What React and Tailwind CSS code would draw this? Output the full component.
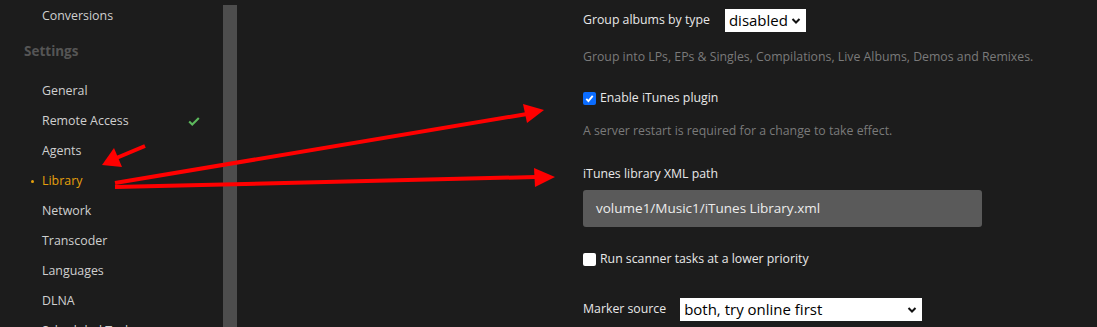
import React from 'react';

const navItems = [
  { label: 'General' },
  { label: 'Remote Access', check: true },
  { label: 'Agents' },
  { label: 'Library', active: true },
  { label: 'Network' },
  { label: 'Transcoder' },
  { label: 'Languages' },
  { label: 'DLNA' },
  { label: 'Scheduled Tasks' },
];

const font = { fontFamily: '"Open Sans", "Noto Sans", sans-serif' };

function Sidebar() {
  return (
    <div className="w-[223px] shrink-0 pt-[1px] text-[12.4px] text-[#cfcfcf]">
      <div className="h-[30px] pl-[42px] flex items-center">Conversions</div>
      <div className="h-[45px] pl-[24px] flex items-center pb-[4px] text-[13.5px] font-bold text-[#555555]">
        Settings
      </div>
      {navItems.map(item => (
        <div key={item.label} className="relative h-[30px] pl-[42px] pr-[22px] flex items-center justify-between">
          {item.active && (
            <span className="absolute left-[31px] top-[14px] w-[3px] h-[3px] rounded-full bg-[#e5a00d]" />
          )}
          <span className={item.active ? 'text-[#e5a00d]' : ''}>{item.label}</span>
          {item.check && (
            <svg className="w-[14px] h-[14px]" viewBox="0 0 16 16" fill="none">
              <path d="M2.5 8.5l3.5 3.5 7.5-7.5" stroke="#5cb85c" strokeWidth="2.4" />
            </svg>
          )}
        </div>
      ))}
    </div>
  );
}

function Select({ value, className }) {
  return (
    <div className={`relative bg-white flex items-center text-black text-[15px] pl-[4px] ${className}`}>
      <span>{value}</span>
      <svg className="absolute right-[5px] top-1/2 -translate-y-1/2 w-[10px] h-[10px]" viewBox="0 0 10 10" fill="none">
        <path d="M1.5 3l3.5 3.5L8.5 3" stroke="#111" strokeWidth="2" />
      </svg>
    </div>
  );
}

function Checkbox({ checked }) {
  return checked ? (
    <span className="w-[13px] h-[13px] rounded-[2px] bg-[#0a6cff] flex items-center justify-center">
      <svg className="w-[11px] h-[11px]" viewBox="0 0 12 12" fill="none">
        <path d="M2.5 6.5l2.3 2.3 4.7-5.6" stroke="white" strokeWidth="2" />
      </svg>
    </span>
  ) : (
    <span className="w-[13px] h-[13px] rounded-[2px] bg-white" />
  );
}

function Settings() {
  return (
    <div className="pl-[346px] pt-[9px] text-[12.3px] text-[#e8e8e8]">
      <div className="flex items-center h-[23px]">
        <span>Group albums by type</span>
        <Select value="disabled" className="ml-[15px] w-[81px] h-[23px] pr-[18px]" />
      </div>
      <div className="mt-[15px] h-[20px] flex items-center text-[#7a7a7a]">
        Group into LPs, EPs &amp; Singles, Compilations, Live Albums, Demos and Remixes.
      </div>
      <div className="mt-[23px] h-[16px] flex items-center gap-[4px]">
        <Checkbox checked />
        <span>Enable iTunes plugin</span>
      </div>
      <div className="mt-[15px] h-[20px] flex items-center text-[#7a7a7a]">
        A server restart is required for a change to take effect.
      </div>
      <div className="mt-[23px] h-[20px] flex items-center">iTunes library XML path</div>
      <div className="mt-[6px] w-[399px] h-[37px] rounded-[3px] bg-[#5a5a5a] pl-[13px] flex items-center text-[13.5px] text-[#ececec]">
        volume1/Music1/iTunes Library.xml
      </div>
      <div className="mt-[24px] h-[16px] flex items-center gap-[4px]">
        <Checkbox />
        <span>Run scanner tasks at a lower priority</span>
      </div>
      <div className="mt-[31px] flex items-center h-[23px]">
        <span>Marker source</span>
        <Select value="both, try online first" className="ml-[14px] w-[242px] h-[23px]" />
      </div>
    </div>
  );
}

function Arrows() {
  return (
    <svg className="absolute inset-0 pointer-events-none" width="1097" height="327" viewBox="0 0 1097 327">
      <g stroke="#ff0000" strokeWidth="4" strokeLinecap="butt">
        <line x1="145" y1="146" x2="114" y2="159" />
        <line x1="115" y1="183" x2="527" y2="114" />
        <line x1="115" y1="187" x2="536" y2="177" />
      </g>
      <g fill="#ff0000">
        <polygon points="102,165 114,148 122,167" />
        <polygon points="544,110 523,104 527,123" />
        <polygon points="555,177 534,168 535,187" />
      </g>
    </svg>
  );
}

export default function App() {
  return (
    <div className="relative w-[1097px] h-[327px] overflow-hidden bg-[#1c1c1c]" style={font}>
      <div className="flex h-full">
        <Sidebar />
        <div className="w-[14px] shrink-0 mt-[5px] bg-[#4d4d4d]" />
        <div className="flex-1">
          <Settings />
        </div>
      </div>
      <Arrows />
    </div>
  );
}
